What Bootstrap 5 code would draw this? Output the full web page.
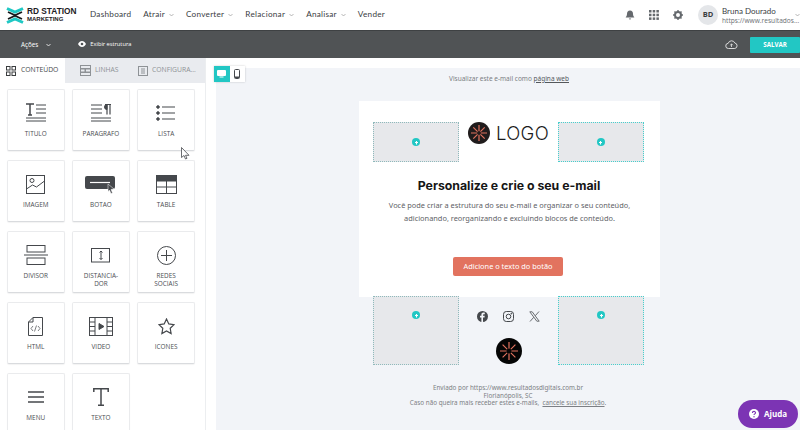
<!DOCTYPE html>
<html lang="pt-BR">
<head>
    <meta charset="UTF-8">
    <title>Editor de e-mail</title>
    <meta name="viewport" content="width=device-width, initial-scale=1">
    <link href="https://cdn.jsdelivr.net/npm/bootstrap@5.3.0/dist/css/bootstrap.min.css" rel="stylesheet">
    <style>
        html, body { height: 430px; overflow: hidden; }
        body { position: relative; background: #fff; font-family: "Open Sans", "Liberation Sans", sans-serif; color: #3a3d3f; }
        .top-head { height: 30px; background: #fff; padding-left: 6px; }
        .brand-mark { width: 18px; height: 17px; }
        .brand-text { margin-left: 3px; font-family: "Liberation Sans", sans-serif; line-height: 7px; color: #1d2023; width: 50px; }
        .brand-text b { display: block; font-size: 8.3px; white-space: nowrap; }
        .brand-text span { display: block; font-size: 6px; font-weight: 700; margin-top: 1px; }
        .menu-list { margin-left: 13px; padding-bottom: 1px; gap: 12px; font-size: 8.2px; font-family: Lato, sans-serif; letter-spacing: .25px; }
        .menu-list svg { margin-left: 4px; }
        .head-icons { gap: 14px; margin-right: 15px; }
        .avatar-dot { width: 20px; height: 20px; border-radius: 50%; background: #e4e6e9; font-size: 7.5px; font-weight: 700; margin-right: 4px; }
        .user-name { font-size: 8px; line-height: 10px; font-family: Lato, sans-serif; }
        .user-url { font-size: 6.6px; line-height: 9px; color: #6c7074; white-space: nowrap; }
        .user-box { width: 68px; margin-right: 5px; }
        .dark-bar { height: 28px; background: #505355; color: #fff; font-size: 6.3px; border-top: 1px solid #3e4143; }
        .act-item { margin-left: 21px; }
        .show-item { margin-left: 27px; font-size: 5.7px; }
        .save-btn { width: 50px; height: 16px; background: #22c7c4; font-size: 6.2px; font-weight: 700; border-radius: 1px; color: #fff; margin-left: 12px; }
        .work-area { height: 372px; }
        .side-col { width: 206px; flex: none; background: #fff; border-right: 1px solid #eceef0; }
        .tab-row { height: 25px; font-size: 6.8px; }
        .tab-on { width: 65px; padding-left: 6px; color: #45494c; gap: 5px; }
        .tab-off { width: 59px; background: #e9ebef; color: #8e9296; gap: 4px; padding-left: 15px; }
        .tab-last { padding-left: 14px; white-space: nowrap; overflow: hidden; }
        .tile-grid { display: grid; grid-template-columns: repeat(3, 57.5px); grid-auto-rows: 62px; gap: 9px 7.7px; padding: 6px 0 0 7px; }
        .tile-box { border: 1px solid #eaebed; border-bottom-color: #d9dbde; border-radius: 2px; background: #fff; font-size: 6.4px; line-height: 7.6px; color: #4b4e52; text-align: center; padding-top: 12px; box-shadow: 0 1px 1px rgba(0,0,0,.05); }
        .tile-box svg { display: block; margin: 0 auto; }
        .tile-icon { height: 22px; margin-bottom: 6px; display: flex; align-items: center; justify-content: center; }
        .canvas-col { flex: 1; background: #fff; position: relative; }
        .view-switch { position: absolute; left: 8px; top: 8px; width: 31px; height: 16px; background: #fff; box-shadow: 0 0 2px rgba(0,0,0,.2); }
        .view-switch div { width: 15.5px; }
        .view-on { background: #22c7c4; }
        .canvas-body { margin: 10px 0 0 10px; height: 362px; background: #f2f4f8; padding-top: 4px; font-family: "Noto Sans", sans-serif; }
        .pre-line { font-size: 6.5px; color: #7c7f84; line-height: 9px; margin: 2px 0 0 233px; }
        .pre-line u { color: #55585c; }
        .mail-box { width: 301px; height: 196px; margin: 18px 0 0 143px; background: #fff; padding-top: 21px; text-align: center; }
        .slot-row { width: 271px; margin-left: 14px; }
        .empty-slot { width: 86px; background: #e7e8eb; border: 1px dotted #47cfcd; }
        .slot-left { border-color: #8fb9bb; }
        .slot-short { height: 40px; }
        .slot-tall { height: 69px; padding-top: 14px; }
        .plus-dot { width: 8px; height: 8px; border-radius: 50%; background: #22c7c4; display: flex; align-items: center; justify-content: center; }
        .logo-word { font-family: Inter, sans-serif; font-weight: 300; font-size: 18.5px; line-height: 22px; color: #1c1c1c; margin-left: 6px; letter-spacing: .3px; }
        .logo-wrap { height: 22px; }
        .mail-title { font-family: Inter, sans-serif; font-weight: 700; font-size: 12.3px; color: #161616; margin: 16px 0 0 -1px; line-height: 16px; }
        .mail-text { font-size: 7.4px; line-height: 13px; color: #5e6166; margin: 5px 0 0 0; }
        .cta-btn { width: 110px; height: 19px; background: #e2735f; color: #fff; font-size: 7.4px; border-radius: 2px; margin: 32px 0 0 94px; }
        .foot-wrap { width: 271px; margin: -1px 0 0 157px; }
        .social-col { width: 99px; padding-top: 12px; }
        .social-row { gap: 15px; height: 16px; }
        .round-logo { width: 26px; height: 26px; margin-top: 14px; }
        .foot-text { width: 320px; margin: 19px 0 0 132px; font-size: 6.3px; line-height: 7.6px; color: #7c7f84; text-align: center; }
        .help-btn { position: absolute; left: 738px; top: 400px; width: 60px; height: 28px; border-radius: 14px; background: #7c34b4; color: #fff; font-size: 8px; font-weight: 700; gap: 5px; }
        .mouse-arrow { position: absolute; left: 181px; top: 147px; }
    </style>
</head>
<body>
<header class="top-head d-flex align-items-center">
    <svg class="brand-mark" viewBox="0 0 18 17">
        <path d="M1 1.500 L9 5 L17 1.500" fill="none" stroke="#1fc8c4" stroke-width="3"/>
        <path d="M2 5 L9 8.300 L16 5" fill="none" stroke="#15181a" stroke-width="1.800"/>
        <path d="M2 12 L9 8.700 L16 12" fill="none" stroke="#15181a" stroke-width="1.800"/>
        <path d="M1 15.500 L9 12 L17 15.500" fill="none" stroke="#1fc8c4" stroke-width="3"/>
    </svg>
    <div class="brand-text"><b>RD STATION</b><span>MARKETING</span></div>
    <nav class="menu-list d-flex align-items-center">
        <span>Dashboard</span>
        <span>Atrair<svg width="5" height="4" viewBox="0 0 5 4"><path d="M.5 1l2 2 2-2" fill="none" stroke="#999" stroke-width=".7"/></svg></span>
        <span>Converter<svg width="5" height="4" viewBox="0 0 5 4"><path d="M.5 1l2 2 2-2" fill="none" stroke="#999" stroke-width=".7"/></svg></span>
        <span>Relacionar<svg width="5" height="4" viewBox="0 0 5 4"><path d="M.5 1l2 2 2-2" fill="none" stroke="#999" stroke-width=".7"/></svg></span>
        <span>Analisar<svg width="5" height="4" viewBox="0 0 5 4"><path d="M.5 1l2 2 2-2" fill="none" stroke="#999" stroke-width=".7"/></svg></span>
        <span>Vender</span>
    </nav>
    <div class="ms-auto d-flex align-items-center">
        <div class="head-icons d-flex align-items-center">
            <svg width="10" height="10" viewBox="0 0 10 10" fill="#65696d"><path d="M5 .5c-2 0-3 1.500-3 3.300 0 1.700-.5 2.500-1.200 3.200v.6h8.400V7c-.7-.7-1.200-1.500-1.200-3.200C8 2 7 .5 5 .5z"/><path d="M3.900 8.500a1.100 1.100 0 0 0 2.200 0z"/></svg>
            <svg width="10" height="10" viewBox="0 0 10 10" fill="#65696d"><rect x="0" y="0" width="2.500" height="2.500"/><rect x="3.700" y="0" width="2.500" height="2.500"/><rect x="7.400" y="0" width="2.500" height="2.500"/><rect x="0" y="3.700" width="2.500" height="2.500"/><rect x="3.700" y="3.700" width="2.500" height="2.500"/><rect x="7.400" y="3.700" width="2.500" height="2.500"/><rect x="0" y="7.400" width="2.500" height="2.500"/><rect x="3.700" y="7.400" width="2.500" height="2.500"/><rect x="7.400" y="7.400" width="2.500" height="2.500"/></svg>
            <svg width="10" height="10" viewBox="0 0 10 10"><circle cx="5" cy="5" r="3" fill="none" stroke="#65696d" stroke-width="2"/><path d="M5 0v2M5 8v2M0 5h2M8 5h2M1.500 1.500l1.400 1.400M7.100 7.100l1.400 1.400M8.500 1.500L7.100 2.900M2.900 7.100L1.500 8.500" stroke="#65696d" stroke-width="1.400"/></svg>
        </div>
        <div class="avatar-dot d-flex align-items-center justify-content-center">BD</div>
        <div class="user-box">
            <div class="user-name">Bruna Dourado</div>
            <div class="user-url">https://www.resultados...</div>
        </div>
        <svg width="5" height="4" viewBox="0 0 5 4"><path d="M.5 1l2 2 2-2" fill="none" stroke="#999" stroke-width=".7"/></svg>
    </div>
</header>

<div class="dark-bar d-flex align-items-center">
    <div class="act-item d-flex align-items-center gap-2">Ações
        <svg width="5" height="4" viewBox="0 0 5 4"><path d="M.5 1l2 2 2-2" fill="none" stroke="#fff" stroke-width=".8"/></svg>
    </div>
    <div class="show-item d-flex align-items-center gap-1">
        <svg width="8" height="6" viewBox="0 0 8 6"><path d="M0 3c1-2 2.500-3 4-3s3 1 4 3c-1 2-2.500 3-4 3S1 5 0 3z" fill="#fff"/><circle cx="4" cy="3" r="1.300" fill="#505355"/></svg>
        <span>Exibir estrutura</span>
    </div>
    <div class="ms-auto d-flex align-items-center">
        <svg width="13" height="9" viewBox="0 0 13 9"><path d="M3.500 8.500a2.600 2.600 0 0 1-.3-5.200A3.500 3.500 0 0 1 9.800 3a2.800 2.800 0 0 1 0 5.500z" fill="none" stroke="#e8e8e8" stroke-width=".9"/><path d="M6.500 7V4M5.200 5.200l1.300-1.300 1.300 1.300" fill="none" stroke="#e8e8e8" stroke-width=".8"/></svg>
        <div class="save-btn d-flex align-items-center justify-content-center">SALVAR</div>
    </div>
</div>

<div class="work-area d-flex">
    <aside class="side-col">
        <div class="tab-row d-flex">
            <div class="tab-on d-flex align-items-center">
                <svg width="10" height="10" viewBox="0 0 10 10" fill="none" stroke="#3a3d3f"><rect x=".5" y=".5" width="3.500" height="3.500"/><rect x="6" y=".5" width="3.500" height="3.500"/><rect x=".5" y="6" width="3.500" height="3.500"/><rect x="6" y="6" width="3.500" height="3.500"/></svg>
                <span>CONTEÚDO</span>
            </div>
            <div class="tab-off d-flex align-items-center">
                <svg width="11" height="11" viewBox="0 0 11 11" fill="none" stroke="#8e9296"><rect x=".5" y=".5" width="10" height="3"/><rect x=".5" y="4" width="4.500" height="3"/><rect x="5.500" y="4" width="5" height="3"/><rect x=".5" y="7.500" width="10" height="3"/></svg>
                <span>LINHAS</span>
            </div>
            <div class="tab-off tab-last d-flex align-items-center flex-fill">
                <svg width="10" height="10" viewBox="0 0 10 10" fill="none" stroke="#8e9296"><rect x=".5" y=".5" width="9" height="9"/><path d="M3 3h4M3 5h4M3 7h4"/></svg>
                <span>CONFIGURA...</span>
            </div>
        </div>
        <div class="tile-grid">
            <div class="tile-box"><div class="tile-icon"><svg width="22" height="20" viewBox="0 0 22 20" stroke="#45484c" fill="none"><path d="M1 1h8M5 1v11M3 12h4" stroke-width="1.500"/><path d="M11 2h10M11 6h10M11 10h10M1 15h20M1 18h20"/></svg></div>TITULO</div>
            <div class="tile-box"><div class="tile-icon"><svg width="22" height="20" viewBox="0 0 22 20" stroke="#45484c" fill="none"><path d="M1 2h11M1 6h11M1 10h11M1 15h20M1 18h20"/><path d="M15 1.500h6M17 1.500v10M20 1.500v10" stroke-width="1.200"/><path d="M17 1.500a2.500 2.500 0 0 0 0 5z" fill="#45484c"/></svg></div>PARAGRAFO</div>
            <div class="tile-box"><div class="tile-icon"><svg width="20" height="16" viewBox="0 0 20 16" fill="#45484c" stroke="#45484c"><circle cx="2" cy="2" r="1.300"/><circle cx="2" cy="8" r="1.300"/><circle cx="2" cy="14" r="1.300"/><path d="M6 2h13M6 8h13M6 14h13" stroke-width="1.200"/></svg></div>LISTA</div>
            <div class="tile-box"><div class="tile-icon"><svg width="19" height="19" viewBox="0 0 19 19" fill="none" stroke="#45484c"><rect x=".5" y=".5" width="18" height="18"/><circle cx="6" cy="5.500" r="2"/><path d="M.5 14l6-4 4 2 8-6"/></svg></div>IMAGEM</div>
            <div class="tile-box"><div class="tile-icon"><svg width="32" height="19" viewBox="0 0 32 19"><rect x="0" y="1" width="30" height="13" rx="2" fill="#45484c"/><path d="M5 7.500h20" stroke="#fff" stroke-width="1.200"/><path d="M23 9l6 5-3 .5 1.500 3.500-1.500.5-1.500-3.500-1.500 1.500z" fill="#45484c" stroke="#fff" stroke-width=".5"/></svg></div>BOTAO</div>
            <div class="tile-box"><div class="tile-icon"><svg width="21" height="19" viewBox="0 0 21 19" fill="none" stroke="#45484c"><rect x=".5" y=".5" width="20" height="18"/><rect x="0" y="0" width="21" height="6" fill="#45484c"/><path d="M.5 12h20M10.500 6v12.500"/></svg></div>TABLE</div>
            <div class="tile-box"><div class="tile-icon"><svg width="24" height="20" viewBox="0 0 24 20" fill="none" stroke="#45484c"><rect x="3" y=".5" width="18" height="6.500"/><path d="M0 10h24"/><rect x="3" y="13" width="18" height="6.500"/></svg></div>DIVISOR</div>
            <div class="tile-box"><div class="tile-icon"><svg width="20" height="15" viewBox="0 0 20 15" fill="none" stroke="#45484c"><rect x=".5" y=".5" width="18" height="13.500"/><path d="M10 3v8.500M8.500 4.500L10 3l1.500 1.500M8.500 10L10 11.500 11.500 10"/></svg></div>DISTANCIA-<br>DOR</div>
            <div class="tile-box"><div class="tile-icon"><svg width="19" height="19" viewBox="0 0 19 19" fill="none" stroke="#45484c"><circle cx="9.500" cy="9.500" r="9"/><path d="M9.500 4v11M4 9.500h11"/></svg></div>REDES<br>SOCIAIS</div>
            <div class="tile-box"><div class="tile-icon"><svg width="15" height="19" viewBox="0 0 15 19" fill="none" stroke="#45484c"><path d="M5 .5h9.500v18H.5V5z"/><path d="M.5 5H5V.5"/><path d="M5 9l-2 2.500L5 14M10 9l2 2.500L10 14M8.500 8.500l-2 6" stroke-width=".7"/></svg></div>HTML</div>
            <div class="tile-box"><div class="tile-icon"><svg width="24" height="19" viewBox="0 0 24 19" fill="none" stroke="#45484c"><rect x=".5" y=".5" width="23" height="18"/><path d="M6 .5v18M18 .5v18M.5 5h5.500M.5 9.500h5.500M.5 14h5.500M18 5h5.500M18 9.500h5.500M18 14h5.500"/><path d="M10 6.500l5 3-5 3z" fill="#45484c"/></svg></div>VIDEO</div>
            <div class="tile-box"><div class="tile-icon"><svg width="17" height="17" viewBox="0 0 17 17" fill="none" stroke="#45484c" stroke-width="1.200"><path d="M8.500 1l2.300 4.900 5.200.7-3.800 3.700.9 5.300-4.600-2.600-4.600 2.600.9-5.300L1 6.600l5.200-.7z"/></svg></div>ICONES</div>
            <div class="tile-box"><div class="tile-icon"><svg width="16" height="12" viewBox="0 0 16 12" stroke="#45484c" stroke-width="1.400"><path d="M0 1h16M0 6h16M0 11h16"/></svg></div>MENU</div>
            <div class="tile-box"><div class="tile-icon"><svg width="16" height="18" viewBox="0 0 16 18" fill="none" stroke="#45484c" stroke-width="1.500"><path d="M.8 4V.8h14.400V4M8 .8v16.400M5 17.200h6"/></svg></div>TEXTO</div>
        </div>
    </aside>

    <main class="canvas-col">
        <div class="view-switch d-flex">
            <div class="view-on d-flex align-items-center justify-content-center"><svg width="9" height="8" viewBox="0 0 9 8" fill="#fff"><rect x="0" y="0" width="9" height="6" rx="1"/><rect x="2.500" y="6.500" width="4" height="1"/></svg></div>
            <div class="d-flex align-items-center justify-content-center"><svg width="6" height="10" viewBox="0 0 6 10"><rect x=".5" y=".5" width="5" height="9" rx="1" fill="none" stroke="#45484c"/><rect x="1" y="7.500" width="4" height="1.500" fill="#45484c"/></svg></div>
        </div>
        <div class="canvas-body">
            <div class="pre-line">Visualizar este e-mail como <u>página web</u></div>
            <div class="mail-box">
                <div class="slot-row d-flex justify-content-between">
                    <div class="empty-slot slot-left slot-short d-flex align-items-center justify-content-center"><span class="plus-dot"><svg width="5" height="5" viewBox="0 0 5 5"><path d="M2.500 4.500V1M1 2.500h3" stroke="#fff" stroke-width="1.100"/></svg></span></div>
                    <div class="logo-wrap d-flex align-items-center">
                        <svg width="22" height="22" viewBox="0 0 22 22"><circle cx="11" cy="11" r="11" fill="#201c1c"/><path d="M11 3v16M3 11h16M5.300 5.300l11.400 11.400M16.700 5.300L5.300 16.700" stroke="#e2735f" stroke-width="1.200"/><circle cx="11" cy="11" r="2" fill="#201c1c"/></svg>
                        <span class="logo-word">LOGO</span>
                    </div>
                    <div class="empty-slot slot-short d-flex align-items-center justify-content-center"><span class="plus-dot"><svg width="5" height="5" viewBox="0 0 5 5"><path d="M2.500 4.500V1M1 2.500h3" stroke="#fff" stroke-width="1.100"/></svg></span></div>
                </div>
                <h1 class="mail-title">Personalize e crie o seu e-mail</h1>
                <p class="mail-text">Você pode criar a estrutura do seu e-mail e organizar o seu conteúdo,<br>adicionando, reorganizando e excluindo blocos de conteúdo.</p>
                <div class="cta-btn d-flex align-items-center justify-content-center">Adicione o texto do botão</div>
            </div>
            <div class="foot-wrap d-flex justify-content-between">
                <div class="empty-slot slot-left slot-tall d-flex justify-content-center"><span class="plus-dot"><svg width="5" height="5" viewBox="0 0 5 5"><path d="M2.500 4.500V1M1 2.500h3" stroke="#fff" stroke-width="1.100"/></svg></span></div>
                <div class="social-col text-center">
                    <div class="social-row d-flex justify-content-center align-items-center">
                        <svg width="11" height="11" viewBox="0 0 11 11"><circle cx="5.500" cy="5.500" r="5.500" fill="#45484c"/><path d="M6 11V6.500h1.500l.2-1.700H6V4c0-.5.2-.8.8-.8h1V1.700C7.500 1.700 7 1.600 6.500 1.600 5.200 1.600 4.400 2.400 4.400 3.800v1H3v1.700h1.400V11z" fill="#f2f4f8"/></svg>
                        <svg width="11" height="11" viewBox="0 0 11 11" fill="none" stroke="#45484c"><rect x=".5" y=".5" width="10" height="10" rx="2.800"/><circle cx="5.500" cy="5.500" r="2.300"/><circle cx="8.300" cy="2.700" r=".4" fill="#45484c"/></svg>
                        <svg width="11" height="11" viewBox="0 0 11 11" fill="none" stroke="#6a6d71"><path d="M.8.8h2.400l7 9.400H7.800zM10 .5L6.200 4.800M4.800 6.200L1 10.500"/></svg>
                    </div>
                    <svg class="round-logo" viewBox="0 0 26 26"><circle cx="13" cy="13" r="13" fill="#050505"/><path d="M13 4v18M4 13h18M6.600 6.600l12.800 12.800M19.400 6.600L6.600 19.400" stroke="#e2735f" stroke-width="1.200"/><circle cx="13" cy="13" r="2.500" fill="#050505"/></svg>
                </div>
                <div class="empty-slot slot-tall d-flex justify-content-center"><span class="plus-dot"><svg width="5" height="5" viewBox="0 0 5 5"><path d="M2.500 4.500V1M1 2.500h3" stroke="#fff" stroke-width="1.100"/></svg></span></div>
            </div>
            <div class="foot-text">Enviado por https://www.resultadosdigitais.com.br<br>Florianópolis, SC<br>Caso não queira mais receber estes e-mails, &nbsp;<u>cancele sua inscrição</u>.</div>
        </div>
    </main>
</div>

<svg class="mouse-arrow" width="9" height="13" viewBox="0 0 9 13"><path d="M.5.5v10l2.500-2 1.500 3.500 1.500-.7L4.500 8.300H8z" fill="#fff" stroke="#45484c" stroke-width=".8"/></svg>
<div class="help-btn d-flex align-items-center justify-content-center">
    <svg width="10" height="10" viewBox="0 0 10 10"><circle cx="5" cy="5" r="5" fill="#fff"/><path d="M3.400 3.900C3.400 3 4.100 2.400 5 2.400s1.600.6 1.600 1.400c0 1.100-1.600 1.100-1.600 2.200" fill="none" stroke="#7c34b4" stroke-width="1.100"/><circle cx="5" cy="7.700" r=".7" fill="#7c34b4"/></svg>
    <span>Ajuda</span>
</div>
<script src="https://cdn.jsdelivr.net/npm/bootstrap@5.3.0/dist/js/bootstrap.bundle.min.js"></script>
</body>
</html>
